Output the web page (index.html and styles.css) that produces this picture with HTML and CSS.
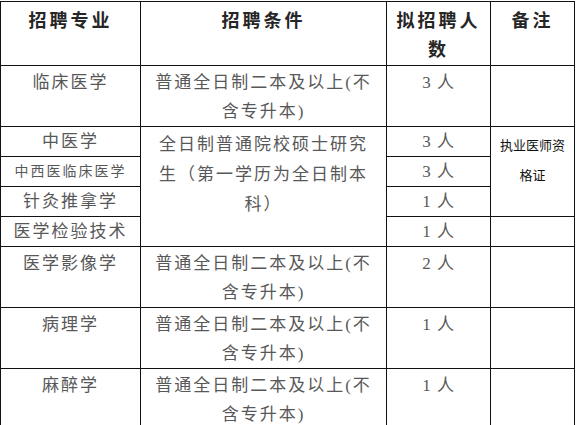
FILE: index.html
```html
<!DOCTYPE html>
<html lang="zh-CN">
<head>
<meta charset="utf-8">
<link rel="stylesheet" href="styles.css">
</head>
<body>
<table class="recruit">
  <colgroup>
    <col class="c-major">
    <col class="c-cond">
    <col class="c-num">
    <col class="c-note">
  </colgroup>
  <thead>
    <tr class="r-head">
      <th>招聘专业</th>
      <th>招聘条件</th>
      <th class="h-num">拟招聘人数</th>
      <th>备注</th>
    </tr>
  </thead>
  <tbody>
    <tr class="r-tall">
      <td>临床医学</td>
      <td class="cond">普通全日制二本及以上(不含专升本)</td>
      <td class="num">3 人</td>
      <td></td>
    </tr>
    <tr class="r-short">
      <td>中医学</td>
      <td class="cond merged" rowspan="4">全日制普通院校硕士研究生（第一学历为全日制本科）</td>
      <td class="num">3 人</td>
      <td class="note" rowspan="3">执业医师资格证</td>
    </tr>
    <tr class="r-short">
      <td class="small">中西医临床医学</td>
      <td class="num">3 人</td>
    </tr>
    <tr class="r-short">
      <td>针灸推拿学</td>
      <td class="num">1 人</td>
    </tr>
    <tr class="r-short">
      <td>医学检验技术</td>
      <td class="num">1 人</td>
      <td></td>
    </tr>
    <tr class="r-tall r-59">
      <td>医学影像学</td>
      <td class="cond">普通全日制二本及以上(不含专升本)</td>
      <td class="num">2 人</td>
      <td></td>
    </tr>
    <tr class="r-tall r-59">
      <td>病理学</td>
      <td class="cond">普通全日制二本及以上(不含专升本)</td>
      <td class="num">1 人</td>
      <td></td>
    </tr>
    <tr class="r-tall">
      <td>麻醉学</td>
      <td class="cond">普通全日制二本及以上(不含专升本)</td>
      <td class="num">1 人</td>
      <td></td>
    </tr>
  </tbody>
</table>
</body>
</html>
```

FILE: styles.css
```css
html, body {
  margin: 0;
  padding: 0;
  background: #ffffff;
}

body {
  padding-top: 1px;
}

.recruit {
  border-collapse: collapse;
  table-layout: fixed;
  width: 574px;
  font-family: "Liberation Serif", "Noto Sans CJK SC", serif;
  font-size: 17px;
  color: #585858;
}

.c-major { width: 140px; }
.c-cond { width: 246px; }
.c-num { width: 104px; }
.c-note { width: 84px; }

.recruit th,
.recruit td {
  border: 1px solid #111111;
  padding: 0 6px;
  text-align: center;
  vertical-align: top;
  line-height: 29px;
  letter-spacing: 2px;
  font-weight: normal;
}

.recruit th {
  font-size: 18px;
  font-weight: bold;
  color: #262626;
  padding-top: 5px;
  letter-spacing: 3px;
}

.r-head { height: 64px; }
.r-tall { height: 60px; }
.r-59 { height: 59px; }
.r-short { height: 30px; }

.r-tall td { padding-top: 2px; }

.cond {
  padding: 0 8px;
}

.recruit .merged {
  padding: 3px 12px 0;
  line-height: 30px;
}

.small {
  font-size: 14px;
  letter-spacing: 1px;
}

.recruit .num {
  letter-spacing: 1px;
}

.recruit .note {
  font-family: "Noto Sans CJK SC", sans-serif;
  font-size: 13px;
  letter-spacing: 0;
  color: #111111;
  line-height: 30px;
  padding: 3px 5px 0;
}
```
